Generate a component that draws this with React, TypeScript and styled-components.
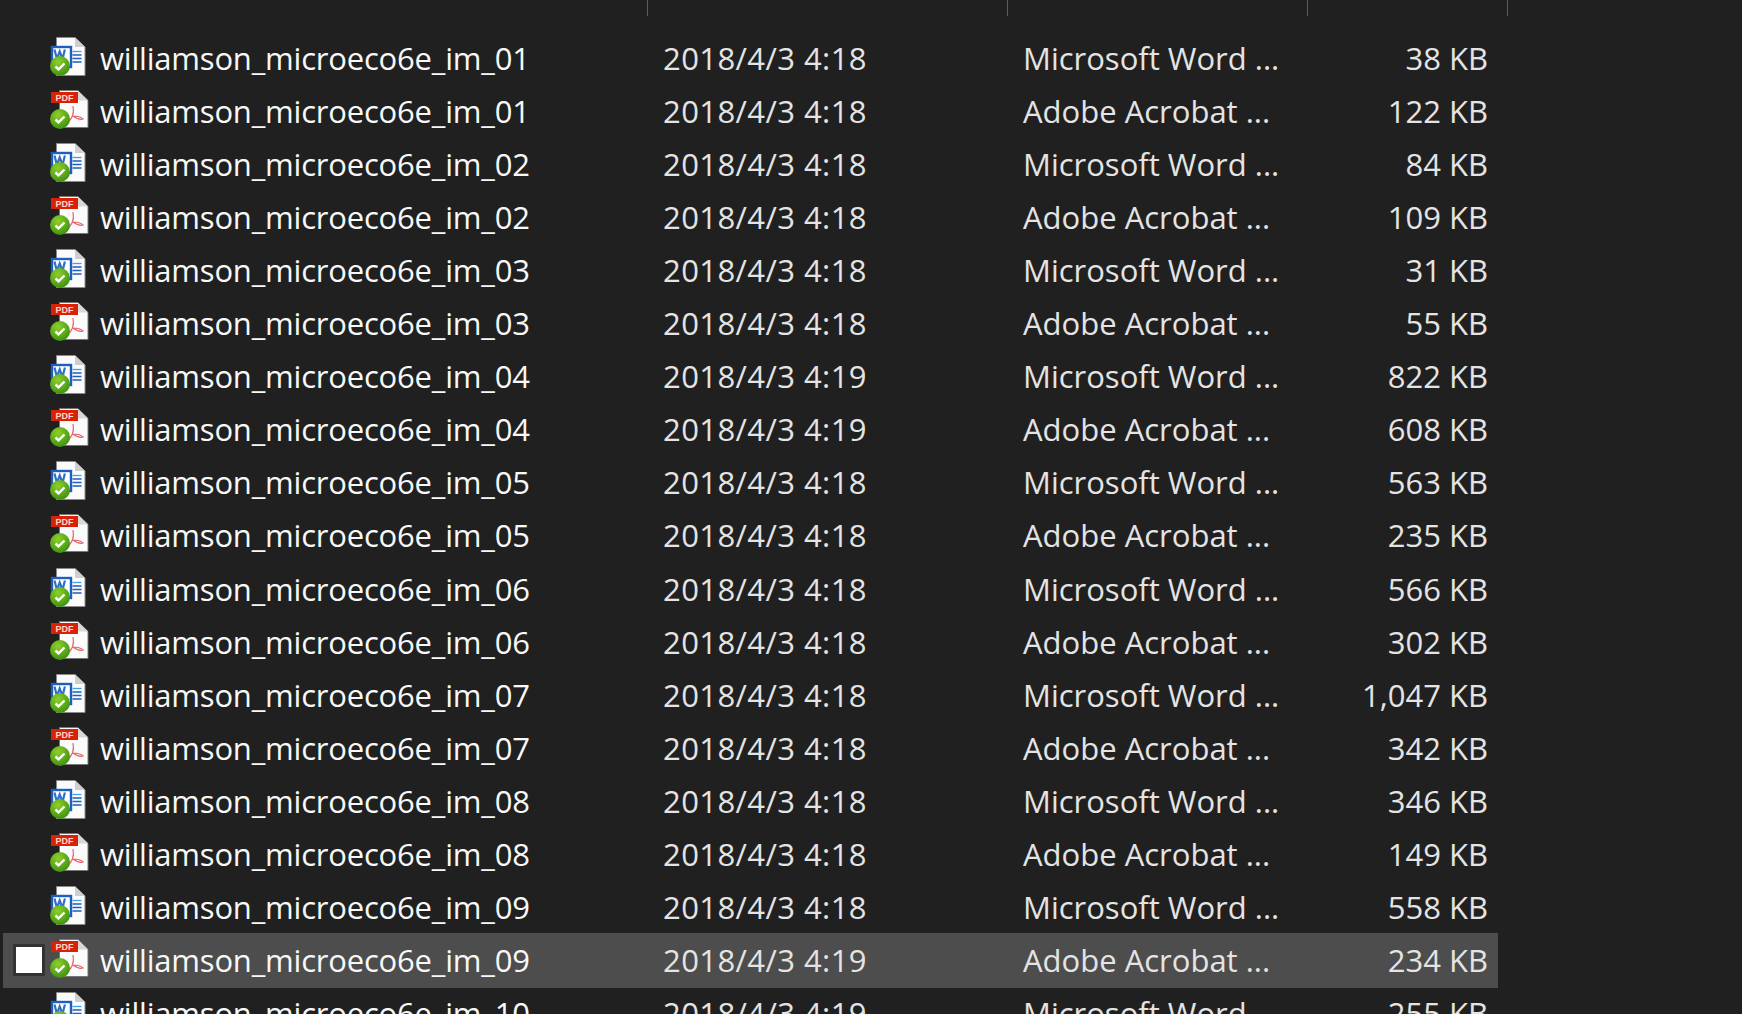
import React from 'react';
import styled, { createGlobalStyle } from 'styled-components';

const GlobalStyle = createGlobalStyle`
  html, body {
    margin: 0;
    padding: 0;
    height: 100%;
    background: #202020;
    overflow: hidden;
  }
`;

const Page = styled.div`
  height: 1014px;
  overflow: hidden;
  background: #202020;
  color: #e4e4e4;
  font-family: "Open Sans", "Noto Sans", sans-serif;
  font-size: 31px;
`;

const HeaderBar = styled.div`
  display: grid;
  grid-template-columns: 648px 360px 300px 200px;
  height: 16px;
  margin-bottom: 16.2px;
`;

const HeaderCell = styled.div`
  border-right: 1px solid #5a5a5a;
`;

const Row = styled.div<{ $selected?: boolean }>`
  display: grid;
  grid-template-columns: 100px 548px 360px 300px 180px;
  box-sizing: border-box;
  width: 1488px;
  height: 53.045px;
  align-items: center;
  white-space: nowrap;
  line-height: 1;
  ${p => p.$selected && `
    background: #4d4d4d;
    height: 55.045px;
    margin: -1px 0 -1px 3px;
    width: 1495px;
    grid-template-columns: 97px 548px 360px 300px 180px;
  `}
`;

const IconCell = styled.div`
  position: relative;
  height: 100%;
  display: flex;
  align-items: center;
`;

const IconBox = styled.svg`
  position: absolute;
  right: 8px;
  top: 50%;
  margin-top: -22.5px;
  width: 44px;
  height: 44px;
`;

const Checkbox = styled.span`
  position: absolute;
  left: 10px;
  top: 50%;
  margin-top: -16px;
  box-sizing: border-box;
  width: 32px;
  height: 32px;
  background: #fff;
  border: 3px solid #333;
`;

const Name = styled.div`
  color: #f8f8f8;
  letter-spacing: -0.2px;
`;

const DateCell = styled.div`
  padding-left: 15px;
  letter-spacing: 0.42px;
`;

const TypeCell = styled.div`
  padding-left: 15px;
`;

const SizeCell = styled.div`
  text-align: right;
`;

const Badge = () => (
  <g>
    <circle cx="12" cy="30" r="10" fill="url(#badge)" />
    <path d="M7.5 30.5l3 2.8 6-5.8" fill="none" stroke="#fff" strokeWidth="2.4" />
  </g>
);

const WordIcon = () => (
  <IconBox viewBox="0 0 44 44">
    <path d="M8.5 1.5h18.5l10 9.5v28.5H8.5z" fill="#fbfbfb" stroke="#8a8a8a" strokeWidth="1" />
    <path d="M27 1.5v9.5h10z" fill="#cfcfcf" />
    <rect x="4" y="11" width="19" height="20" fill="#fff" stroke="#1d5fc0" strokeWidth="2.4" />
    <path d="M6.5 13.5l2.4 9.5 2.8-7.5 2.8 7.5 2.4-9.5" fill="none" stroke="#2f6fc8" strokeWidth="2.2" />
    <path d="M24.5 15.5h9" stroke="#43a0e8" strokeWidth="1.3" />
    <path d="M24.5 19h9M24.5 22.5h9M24.5 26h9" stroke="#1d5fc0" strokeWidth="1.3" />
    <Badge />
  </IconBox>
);

const PdfIcon = () => (
  <IconBox viewBox="0 0 44 44">
    <path d="M11.5 1.5h18l10.5 10v27H11.5z" fill="#fbfbfb" stroke="#777" strokeWidth="1" />
    <path d="M30 1.5v10h10z" fill="#d8d8d8" />
    <rect x="3" y="3" width="27" height="11" fill="#d92106" />
    <text x="16.5" y="12" textAnchor="middle" fontFamily="Liberation Sans" fontWeight="700" fontSize="9" fill="#ffd8cc">PDF</text>
    <path d="M25 17c2 10-3 14-6 18M25 27c4 3 7 4 10 3-2-2-6-3-10-3" fill="none" stroke="#e8606a" strokeWidth="1.2" />
    <Badge />
  </IconBox>
);

type FileRow = { name: string; date: string; kind: 'word' | 'pdf'; size: string };

const rows: FileRow[] = [
  ['01', '4:18', 'word', '38 KB'],
  ['01', '4:18', 'pdf', '122 KB'],
  ['02', '4:18', 'word', '84 KB'],
  ['02', '4:18', 'pdf', '109 KB'],
  ['03', '4:18', 'word', '31 KB'],
  ['03', '4:18', 'pdf', '55 KB'],
  ['04', '4:19', 'word', '822 KB'],
  ['04', '4:19', 'pdf', '608 KB'],
  ['05', '4:18', 'word', '563 KB'],
  ['05', '4:18', 'pdf', '235 KB'],
  ['06', '4:18', 'word', '566 KB'],
  ['06', '4:18', 'pdf', '302 KB'],
  ['07', '4:18', 'word', '1,047 KB'],
  ['07', '4:18', 'pdf', '342 KB'],
  ['08', '4:18', 'word', '346 KB'],
  ['08', '4:18', 'pdf', '149 KB'],
  ['09', '4:18', 'word', '558 KB'],
  ['09', '4:19', 'pdf', '234 KB'],
  ['10', '4:19', 'word', '255 KB'],
].map(([n, t, kind, size]) => ({
  name: `williamson_microeco6e_im_${n}`,
  date: `2018/4/3 ${t}`,
  kind: kind as FileRow['kind'],
  size,
}));

export default function App() {
  return (
    <Page>
      <GlobalStyle />
      <svg width="0" height="0" style={{ position: 'absolute' }}>
        <defs>
          <radialGradient id="badge" cx="40%" cy="30%" r="75%">
            <stop offset="0%" stopColor="#8ed02a" />
            <stop offset="100%" stopColor="#3a8f10" />
          </radialGradient>
        </defs>
      </svg>
      <HeaderBar>
        <HeaderCell />
        <HeaderCell />
        <HeaderCell />
        <HeaderCell />
      </HeaderBar>
      {rows.map((r, i) => (
        <Row key={i} $selected={i === 17}>
          <IconCell>
            {i === 17 && <Checkbox />}
            {r.kind === 'word' ? <WordIcon /> : <PdfIcon />}
          </IconCell>
          <Name>{r.name}</Name>
          <DateCell>{r.date}</DateCell>
          <TypeCell>{r.kind === 'word' ? 'Microsoft Word ...' : 'Adobe Acrobat ...'}</TypeCell>
          <SizeCell>{r.size}</SizeCell>
        </Row>
      ))}
    </Page>
  );
}
